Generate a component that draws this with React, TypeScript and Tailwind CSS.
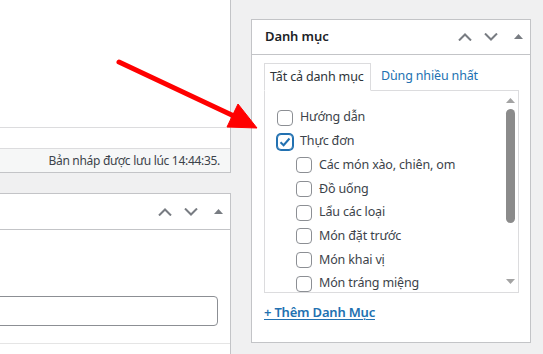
const font = { fontFamily: '"Noto Sans", "Liberation Sans", sans-serif' }

function Chevron({ up }: { up?: boolean }) {
  return (
    <svg width="14" height="8" viewBox="0 0 14 8" className="block">
      <path d={up ? 'M1 7.5 L7 1.5 L13 7.5' : 'M1 0.5 L7 6.5 L13 0.5'} fill="none" stroke="#787c82" strokeWidth="2" />
    </svg>
  )
}

function Tri() {
  return (
    <svg width="9" height="5" viewBox="0 0 9 5" className="block">
      <path d="M0 5 L4.5 0 L9 5 Z" fill="#787c82" />
    </svg>
  )
}

function HeaderIcons() {
  return (
    <div className="flex items-center pr-[7px]">
      <Chevron up />
      <div className="ml-[12px]"><Chevron /></div>
      <div className="ml-[16px] -mt-px"><Tri /></div>
    </div>
  )
}

function Box({ checked }: { checked?: boolean }) {
  return (
    <div className={`flex h-[16px] w-[16px] shrink-0 items-center justify-center rounded-[4px] border bg-white ${checked ? 'border-[#2271b1] shadow-[0_0_0_1px_#2271b1]' : 'border-[#8c8f94]'}`}>
      {checked && (
        <svg width="12" height="10" viewBox="0 0 12 10">
          <path d="M1.5 5.2 L4.6 8.2 L10.5 1.5" fill="none" stroke="#2271b1" strokeWidth="2" />
        </svg>
      )}
    </div>
  )
}

const items: { name: string; child?: boolean; checked?: boolean }[] = [
  { name: 'Hướng dẫn' },
  { name: 'Thực đơn', checked: true },
  { name: 'Các món xào, chiên, om', child: true },
  { name: 'Đồ uống', child: true },
  { name: 'Lẩu các loại', child: true },
  { name: 'Món đặt trước', child: true },
  { name: 'Món khai vị', child: true },
  { name: 'Món tráng miệng', child: true },
]

export default function App() {
  return (
    <div className="relative flex h-[354px] w-[543px] overflow-hidden bg-[#f0f0f1] text-[12.5px] tracking-[-0.15px] text-[#3c434a]" style={font}>
      {/* left column: editor + next box */}
      <div className="flex w-[231px] shrink-0 flex-col">
        <div className="flex h-[173px] flex-col border-r border-b border-[#c3c4c7] bg-white">
          <div className="h-[127px]" />
          <div className="h-[21px] border-t border-[#dcdcde]" />
          <div className="flex flex-1 items-center justify-end border-t border-[#dcdcde] bg-[#f6f7f7] pr-[10px] text-[12px] tracking-[-0.3px]">
            Bản nháp được lưu lúc 14:44:35.
          </div>
        </div>
        <div className="mt-[20px] flex flex-1 flex-col border-t border-r border-[#c3c4c7] bg-white">
          <div className="flex h-[36px] items-center justify-end border-b border-[#c3c4c7]">
            <HeaderIcons />
          </div>
          <div className="mt-[66px] -ml-[10px] mr-[12px] h-[30px] rounded-[4px] border border-[#8c8f94]" />
          <div className="mt-[17px] border-t border-[#e5e5e5]" />
        </div>
      </div>

      {/* category box */}
      <div className="mt-[19px] ml-[20px] flex h-[324px] w-[280px] shrink-0 flex-col border border-[#c3c4c7] bg-white">
        <div className="flex h-[35px] items-center justify-between border-b border-[#c3c4c7] pl-[13px]">
          <span className="text-[13px] font-semibold tracking-[-0.1px] text-[#1d2327]">Danh mục</span>
          <HeaderIcons />
        </div>
        <div className="px-[12px] pt-[8px]">
          <div className="flex items-end">
            <div className="relative z-10 -mb-px flex h-[28px] w-[107px] items-center border border-b-white border-[#dcdcde] bg-white px-[5px] text-[#2c3338]">
              Tất cả danh mục
            </div>
            <div className="ml-[10px] flex h-[27px] items-center text-[#2271b1]">Dùng nhiều nhất</div>
          </div>
          <div className="flex h-[203px] w-[255px] border border-[#dcdcde] bg-white">
            <div className="flex-1 overflow-hidden pt-[15px] pl-[12px]">
              {items.map((it) => (
                <div key={it.name} className={`flex h-[23.7px] items-center gap-[7px] ${it.child ? 'ml-[19px]' : ''}`}>
                  <Box checked={it.checked} />
                  <span className="whitespace-nowrap">{it.name}</span>
                </div>
              ))}
            </div>
            <div className="flex w-[14px] flex-col items-center pt-[7px] pr-px">
              <svg width="9" height="5" viewBox="0 0 9 5" className="block"><path d="M0 5 L4.5 0 L9 5 Z" fill="#a3a3a3" /></svg>
              <div className="mt-[6px] h-[114px] w-[9px] rounded-full bg-[#8b8b8b]" />
              <div className="mt-auto mb-[8px]">
                <svg width="9" height="5" viewBox="0 0 9 5" className="block"><path d="M0 0 L4.5 5 L9 0 Z" fill="#a3a3a3" /></svg>
              </div>
            </div>
          </div>
          <div className="mt-[10px] text-[13px] font-semibold tracking-[-0.2px] text-[#2271b1] underline underline-offset-2">+ Thêm Danh Mục</div>
        </div>
      </div>

      {/* red annotation arrow */}
      <svg className="pointer-events-none absolute top-0 left-0" width="543" height="354">
        <line x1="119" y1="62" x2="236" y2="117" stroke="#ff0000" strokeWidth="5" strokeLinecap="round" />
        <polygon points="238,104 227,127 257,128" fill="#ff0000" stroke="#ff0000" strokeWidth="1" strokeLinejoin="round" />
      </svg>
    </div>
  )
}
